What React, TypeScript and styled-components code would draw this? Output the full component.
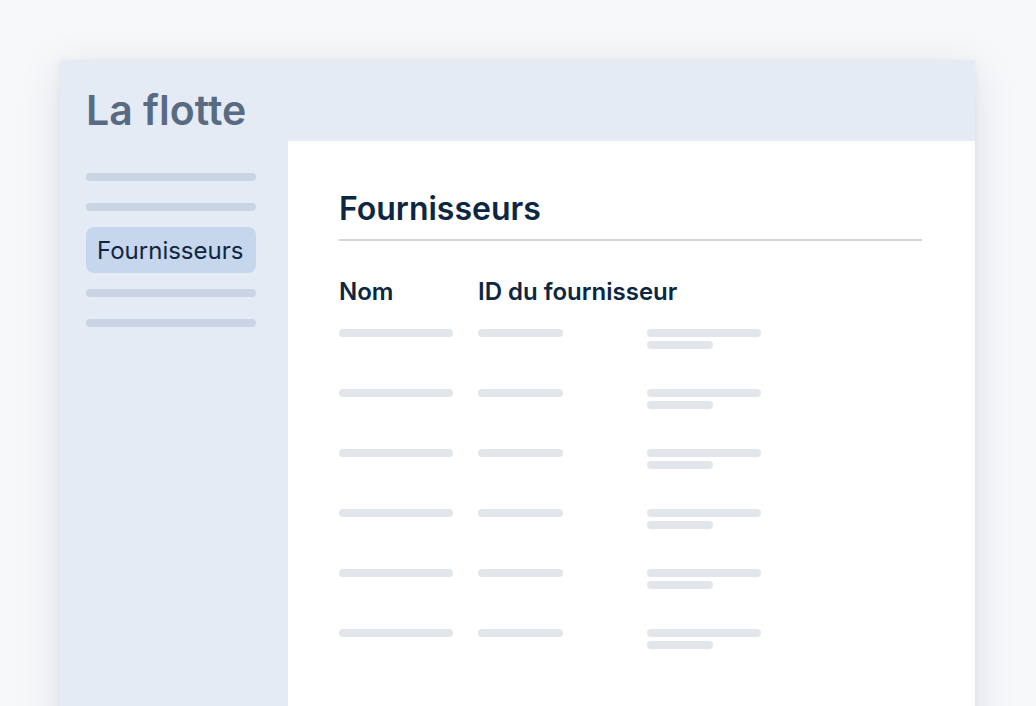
import React from "react";
import styled, { createGlobalStyle } from "styled-components";

const Global = createGlobalStyle`
  html, body {
    margin: 0;
    padding: 0;
    background: #f7f8fa;
    font-family: Inter, "Noto Sans", sans-serif;
  }
  body { overflow: hidden; height: 706px; }
`;

const Page = styled.div`
  padding: 60px 61px 0 60px;
  height: 646px;
  overflow: hidden;
`;

const Window = styled.div`
  display: grid;
  grid-template-columns: 228px 1fr;
  grid-template-rows: 81px 1fr;
  height: 700px;
  background: #e4ebf5;
  box-shadow: 0 10px 40px rgba(30, 45, 70, 0.12), 0 2px 8px rgba(30, 45, 70, 0.05);
`;

const Header = styled.div`
  grid-column: 1 / 3;
  display: flex;
  align-items: center;
  padding: 18px 0 0 26px;
  box-sizing: border-box;
`;

const Brand = styled.h1`
  margin: 0;
  font-size: 41px;
  font-weight: 600;
  color: #586b82;
  line-height: 50px;
  white-space: nowrap;
`;

const Sidebar = styled.nav`
  display: flex;
  flex-direction: column;
  padding: 32px 32px 0 26px;
`;

const NavBar = styled.div<{ $mt: number }>`
  height: 8px;
  border-radius: 4px;
  background: #c9d4e4;
  margin-top: ${(p) => p.$mt}px;
`;

const NavActive = styled.div`
  margin-top: 16px;
  height: 46px;
  border-radius: 8px;
  background: #c5d6ed;
  display: flex;
  align-items: center;
  padding-left: 11px;
  font-size: 24px;
  color: #0f2540;
  white-space: nowrap;
`;

const Main = styled.main`
  background: #ffffff;
  padding: 47px 53px 0 51px;
`;

const Title = styled.h2`
  margin: 0;
  font-size: 32px;
  font-weight: 600;
  color: #0d2642;
  line-height: 42px;
  padding-bottom: 9px;
  border-bottom: 2px solid #d4d7dc;
  white-space: nowrap;
`;

const Table = styled.div`
  display: grid;
  grid-template-columns: 139px 169px 1fr;
  margin-top: 36px;
`;

const Th = styled.div`
  font-size: 24px;
  font-weight: 600;
  color: #0d2642;
  line-height: 30px;
  margin-bottom: 22px;
  white-space: nowrap;
`;

const Cell = styled.div`
  display: flex;
  flex-direction: column;
  gap: 4px;
  height: 60px;
`;

const Line = styled.div<{ $w: number }>`
  width: ${(p) => p.$w}px;
  height: 8px;
  border-radius: 4px;
  background: #e2e5e9;
`;

const rows = [0, 1, 2, 3, 4, 5];

export default function App() {
  return (
    <>
      <Global />
      <Page>
        <Window>
          <Header>
            <Brand>La flotte</Brand>
          </Header>
          <Sidebar>
            <NavBar $mt={0} />
            <NavBar $mt={22} />
            <NavActive>Fournisseurs</NavActive>
            <NavBar $mt={16} />
            <NavBar $mt={22} />
          </Sidebar>
          <Main>
            <Title>Fournisseurs</Title>
            <Table>
              <Th>Nom</Th>
              <Th>ID du fournisseur</Th>
              <Th />
              {rows.map((r) => (
                <React.Fragment key={r}>
                  <Cell>
                    <Line $w={114} />
                  </Cell>
                  <Cell>
                    <Line $w={85} />
                  </Cell>
                  <Cell>
                    <Line $w={114} />
                    <Line $w={66} />
                  </Cell>
                </React.Fragment>
              ))}
            </Table>
          </Main>
        </Window>
      </Page>
    </>
  );
}
